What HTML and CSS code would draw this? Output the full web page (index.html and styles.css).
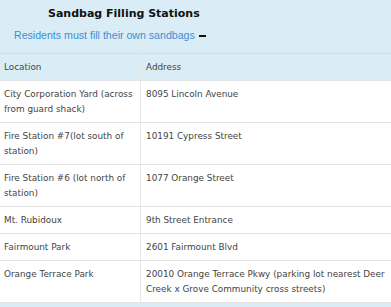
FILE: index.html
```html
<!DOCTYPE html>
<html>
<head>
<meta charset="utf-8">
<link rel="stylesheet" href="styles.css">
</head>
<body>
<div class="panel">
  <div class="title">Sandbag Filling Stations</div>
  <div class="sub"><a class="link" href="#">Residents must fill their own sandbags</a><span class="toggle"></span></div>
  <table class="grid">
    <thead>
      <tr><th class="c1">Location</th><th class="c2">Address</th></tr>
    </thead>
    <tbody>
      <tr><td>City Corporation Yard (across from guard shack)</td><td>8095 Lincoln Avenue</td></tr>
      <tr><td>Fire Station #7(lot south of station)</td><td>10191 Cypress Street</td></tr>
      <tr><td>Fire Station #6 (lot north of station)</td><td>1077 Orange Street</td></tr>
      <tr><td>Mt. Rubidoux</td><td>9th Street Entrance</td></tr>
      <tr><td>Fairmount Park</td><td>2601 Fairmount Blvd</td></tr>
      <tr><td>Orange Terrace Park</td><td>20010 Orange Terrace Pkwy (parking lot nearest Deer Creek x Grove Community cross streets)</td></tr>
    </tbody>
  </table>
</div>
</body>
</html>
```
FILE: styles.css
```css
html, body {
  margin: 0;
  padding: 0;
  background: #daedf7;
}
.panel {
  width: 391px;
  height: 307px;
  background: #daedf7;
  overflow: hidden;
}
.title {
  font-family: "DejaVu Sans", Verdana, sans-serif;
  font-weight: bold;
  font-size: 11px;
  color: #111;
  padding: 6px 0 0 48px;
  height: 17px;
  line-height: 15px;
}
.sub {
  display: flex;
  align-items: center;
  padding-left: 14px;
  height: 24px;
  padding-bottom: 6px;
}
.link {
  font-family: "Liberation Sans", Arial, sans-serif;
  font-size: 10.6px;
  color: #3b8fcf;
  text-decoration: none;
}
.toggle {
  display: inline-block;
  width: 7px;
  height: 2px;
  background: #111;
  margin-left: 4px;
  margin-top: 1px;
}
.grid {
  width: 391px;
  border-collapse: collapse;
  font-family: "DejaVu Sans", Verdana, sans-serif;
  font-size: 8.85px;
  color: #444;
  table-layout: fixed;
  border-top: 1px solid #cddfe9;
}
.grid th {
  background: #daedf7;
  font-weight: normal;
  text-align: left;
  height: 26px;
  padding: 0 5px 0 4px;
  line-height: 16px;
  border-bottom: 1px solid #e2e6e8;
}
.grid .c1 { width: 131px; border-right: 1px solid #e4e8ea; }
.grid .c2 { padding-left: 5px; }
.grid td {
  background: #fff;
  vertical-align: top;
  line-height: 15px;
  padding: 6px 2px 5px 4px;
  border-bottom: 1px solid #e3e3e3;
}
.grid td:first-child { border-right: 1px solid #e8e8e8; padding-right: 4px; }
.grid td + td { padding-left: 5px; }
```
